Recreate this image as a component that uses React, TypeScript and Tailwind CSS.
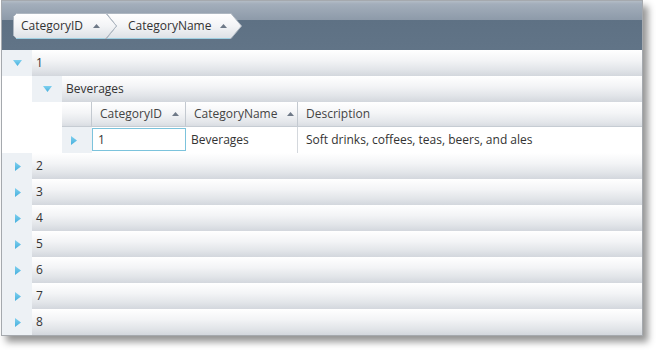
import React from "react";

const rowBg =
  "bg-[linear-gradient(to_bottom,#ffffff_0%,#f3f4f6_40%,#e2e5e9_75%,#d3d7dd_100%)]";
const headBg =
  "bg-[linear-gradient(to_bottom,#ffffff_0%,#f4f5f7_45%,#e3e6ea_85%,#d9dde2_100%)]";

function SortArrow() {
  return (
    <svg width="7" height="4" viewBox="0 0 7 4" className="relative shrink-0">
      <polygon points="0,4 3.5,0 7,4" fill="#6e7987" />
    </svg>
  );
}

function ArrowRight() {
  return (
    <svg width="6" height="9" viewBox="0 0 6 9">
      <defs>
        <linearGradient id="ar" x1="0" y1="0" x2="0" y2="1">
          <stop offset="0" stopColor="#7fd0ef" />
          <stop offset="1" stopColor="#45afdd" />
        </linearGradient>
      </defs>
      <polygon points="0,0 6,4.5 0,9" fill="url(#ar)" />
    </svg>
  );
}

function ArrowDown() {
  return (
    <svg width="9" height="6" viewBox="0 0 9 6">
      <defs>
        <linearGradient id="ad" x1="0" y1="0" x2="0" y2="1">
          <stop offset="0" stopColor="#7fd0ef" />
          <stop offset="1" stopColor="#45afdd" />
        </linearGradient>
      </defs>
      <polygon points="0,0 9,0 4.5,6" fill="url(#ad)" />
    </svg>
  );
}

function Crumb({ label, first }: { label: string; first?: boolean }) {
  const w = first ? 104 : 136;
  const pts = first
    ? "0.5,3.5 3.5,0.5 93,0.5 103.5,13 93,25.5 3.5,25.5 0.5,22.5"
    : "0.5,0.5 125,0.5 135.5,13 125,25.5 0.5,25.5 10.5,13";
  return (
    <div
      className={`relative h-[26px] flex items-center ${
        first ? "w-[104px] pl-[8px] gap-[10px] z-10" : "w-[136px] -ml-[11px] pl-[22px] gap-[9px]"
      }`}
    >
      <svg width={w} height="26" className="absolute left-0 top-0">
        <defs>
          <linearGradient id={`cg${first ? 1 : 2}`} x1="0" y1="0" x2="0" y2="1">
            <stop offset="0" stopColor="#ffffff" />
            <stop offset="0.5" stopColor="#f3f4f6" />
            <stop offset="1" stopColor="#dde1e6" />
          </linearGradient>
        </defs>
        <polygon points={pts} fill={`url(#cg${first ? 1 : 2})`} stroke="#aeb7c1" strokeWidth="1" />
        <line x1={first ? 3 : 1} y1="25.5" x2={w - 12} y2="25.5" stroke="#9fd0e2" strokeWidth="1" />
      </svg>
      <span className="relative text-[#333]">{label}</span>
      <SortArrow />
    </div>
  );
}

function GroupRow({ n, open }: { n: number; open?: boolean }) {
  return (
    <div className="flex h-[26px]">
      <div className={`w-[30px] bg-[#edf1f5] flex items-center ${open ? "pl-[11px]" : "pl-[13px]"}`}>
        {open ? <ArrowDown /> : <ArrowRight />}
      </div>
      <div className={`flex-1 flex items-center pl-[4px] ${rowBg}`}>{n}</div>
    </div>
  );
}

export default function App() {
  const rest = [2, 3, 4, 5, 6, 7, 8];
  return (
    <div className="w-[663px] h-[356px] bg-white font-['Open_Sans','Noto_Sans',sans-serif] text-[12px] text-[#333] overflow-hidden">
      <div className="ml-px w-[642px] border border-[#a5a9ae] shadow-[5px_6px_7px_rgba(0,0,0,0.42)] bg-white">
        {/* Group panel */}
        <div className="h-[49px] pl-[11px] pt-[12px] flex bg-[linear-gradient(to_bottom,#b3bcc6_0px,#a3aebb_3px,#8d9aa9_19px,#5e7184_19px,#617487_49px)]">
          <Crumb label="CategoryID" first />
          <Crumb label="CategoryName" />
        </div>

        <GroupRow n={1} open />

        {/* Sub group */}
        <div className="flex h-[26px]">
          <div className="w-[30px] bg-white" />
          <div className="w-[30px] bg-[#edf1f5] flex items-center pl-[11px]">
            <ArrowDown />
          </div>
          <div className={`flex-1 flex items-center pl-[4px] ${rowBg}`}>Beverages</div>
        </div>

        {/* Inner grid header */}
        <div className="flex h-[25px]">
          <div className="w-[60px] bg-white" />
          <div className={`flex-1 flex border-b border-[#c6ccd3] ${headBg}`}>
            <div className="w-[30px] border-r border-[#c3c9d0]" />
            <div className="w-[94px] border-r border-[#c3c9d0] flex items-center pl-[8px] gap-[10px] text-[#444]">
              CategoryID <SortArrow />
            </div>
            <div className="w-[112px] border-r border-[#c3c9d0] flex items-center pl-[8px] gap-[10px] text-[#444]">
              CategoryName <SortArrow />
            </div>
            <div className="flex-1 flex items-center pl-[8px] text-[#444]">Description</div>
          </div>
        </div>

        {/* Inner data row */}
        <div className="flex h-[26px]">
          <div className="w-[60px] bg-white" />
          <div className="w-[30px] bg-[#edf1f5] flex items-center pl-[9px]">
            <ArrowRight />
          </div>
          <div className="w-[94px] h-[23px] mt-px border border-[#7cc3dc] flex items-center pl-[5px]">1</div>
          <div className="w-[112px] flex items-center pl-[5px] border-r border-[#d4d8dd]">Beverages</div>
          <div className="flex-1 flex items-center pl-[8px]">Soft drinks, coffees, teas, beers, and ales</div>
        </div>

        {rest.map((n) => (
          <GroupRow key={n} n={n} />
        ))}
      </div>
    </div>
  );
}
